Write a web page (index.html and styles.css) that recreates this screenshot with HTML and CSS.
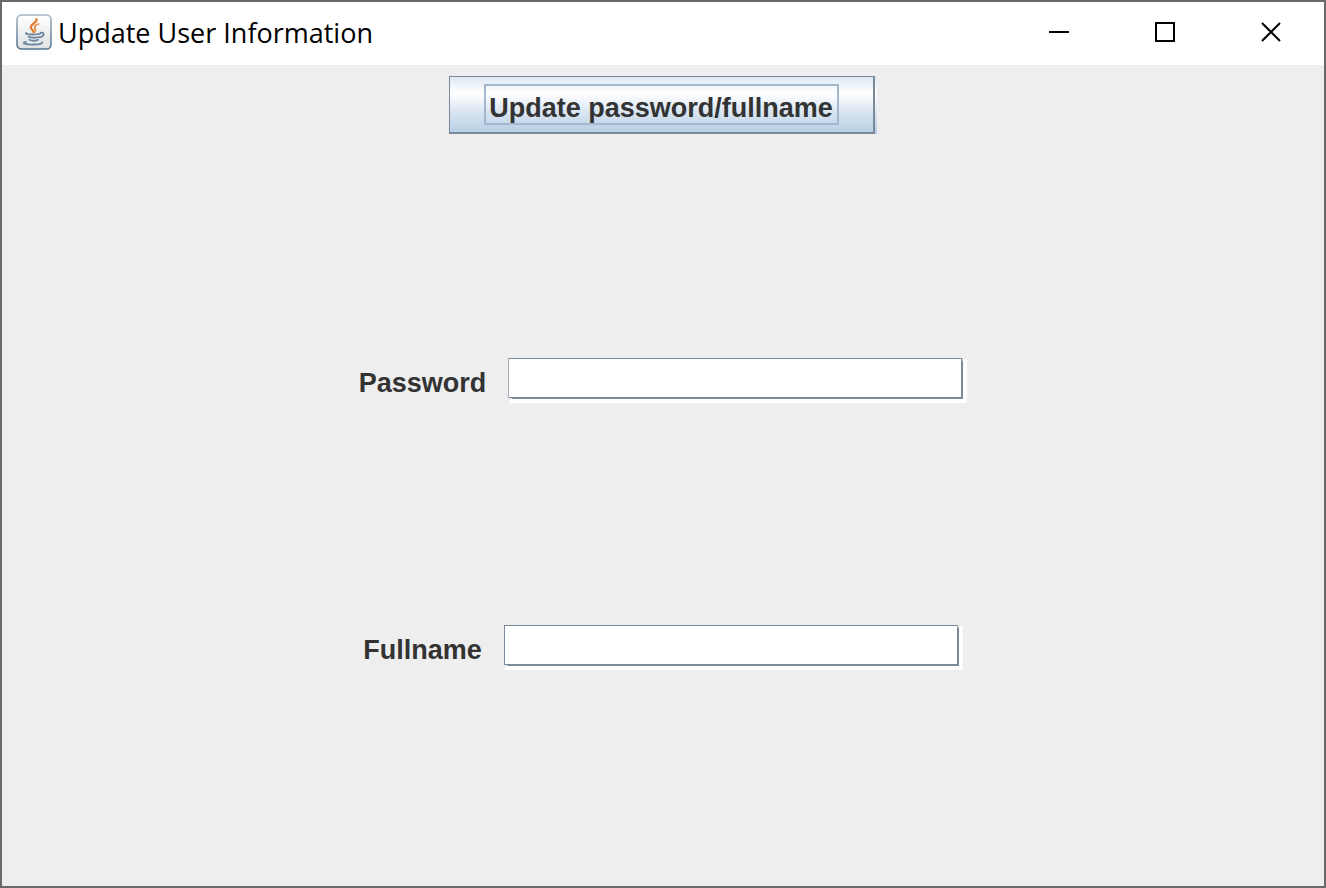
FILE: index.html
```
<!DOCTYPE html>
<html lang="en">
<head>
<meta charset="utf-8">
<title>Update User Information</title>
<link rel="stylesheet" href="styles.css">
</head>
<body>
<div class="window">
  <header class="titlebar">
    <svg class="app-icon" viewBox="0 0 36 36" aria-hidden="true">
      <defs>
        <linearGradient id="plate" x1="0" y1="0" x2="0" y2="1">
          <stop offset="0" stop-color="#fff"/><stop offset="1" stop-color="#dfe1e3"/>
        </linearGradient>
        <linearGradient id="rim" x1="0" y1="0" x2="0" y2="1">
          <stop offset="0" stop-color="#a5b5c2"/><stop offset="1" stop-color="#54748f"/>
        </linearGradient>
      </defs>
      <rect x="1" y="1" width="34" height="34" rx="4.5" fill="url(#plate)" stroke="url(#rim)" stroke-width="1.6"/>
      <g fill="none" stroke-linecap="round">
        <path d="M20.500 5c1 4-7 5-5.500 9 .5 1.500 2 2 2.500 4" stroke="#e8792b" stroke-width="2.200"/>
        <path d="M22.500 10c-3 1-4.500 2.200-3.500 4 .7 1.500 1 2.500-.5 4" stroke="#ef8d45" stroke-width="1.800"/>
        <path d="M10.500 19c-2 .8 1 1.500 6 1.500s7-.4 8-1" stroke="#6c879f" stroke-width="1.800"/>
        <path d="M24.500 18.800c4-1.300 4.500 3.200-.5 4.700" stroke="#6c879f" stroke-width="1.800"/>
        <path d="M12.500 22.800c2 1.200 8 1.200 10.500.2M13.500 25.700c2 1.100 6 1.100 8.500.1" stroke="#6c879f" stroke-width="1.800"/>
        <path d="M10 27.800c-6 1.500 1 2.900 8 2.700 5-.1 9-1 8-2.300" stroke="#6c879f" stroke-width="1.800"/>
      </g>
    </svg>
    <h1 class="title">Update User Information</h1>
    <div class="controls">
      <button class="control" type="button" aria-label="Minimize"><svg class="glyph" viewBox="0 0 20 20"><path d="M0 10H20"/></svg></button>
      <button class="control" type="button" aria-label="Maximize"><svg class="glyph" viewBox="0 0 20 20"><path d="M1 1H19V19H1Z"/></svg></button>
      <button class="control" type="button" aria-label="Close"><svg class="glyph" viewBox="0 0 20 20"><path d="M1 1L19 19M19 1L1 19"/></svg></button>
    </div>
  </header>
  <form class="content">
    <div class="row">
      <button class="update" type="button"><span class="update-text">Update password/fullname</span></button>
    </div>
    <div class="row">
      <label class="label" for="password">Password</label>
      <span class="field"><input class="input" id="password" type="password"></span>
    </div>
    <div class="row">
      <label class="label" for="fullname">Fullname</label>
      <span class="field"><input class="input" id="fullname" type="text"></span>
    </div>
  </form>
</div>
</body>
</html>
```
FILE: styles.css
```
* {
  box-sizing: border-box;
}

body {
  margin: 0;
  font-family: "Liberation Sans", Arial, sans-serif;
}

.window {
  display: flex;
  flex-direction: column;
  min-height: 100vh;
  border: 2px solid #696969;
  background: #eee;
}

.titlebar {
  display: flex;
  align-items: center;
  padding: 0 0 3px 14px;
  background: #fff;
}

.app-icon {
  width: 36px;
  height: 36px;
}

.title {
  flex: 1;
  margin: 0 0 0 6px;
  padding-top: 2px;
  font: 400 27px/36px "Open Sans", "Noto Sans", sans-serif;
  color: #000;
}

.controls {
  display: flex;
}

.control {
  display: grid;
  place-items: center;
  width: 106px;
  height: 60px;
  padding: 0;
  border: 0;
  background: transparent;
}

.glyph {
  width: 20px;
  height: 20px;
  fill: none;
  stroke: #000;
  stroke-width: 2;
}

.content {
  flex: 1;
  display: grid;
  grid-template-rows: 282fr 267fr 272fr;
}

.row {
  display: flex;
  justify-content: center;
  align-items: flex-start;
  gap: 22px;
  padding-top: 11px;
}

.label {
  font-size: 27px;
  font-weight: 700;
  line-height: 50px;
  color: #333;
}

.update {
  position: relative;
  margin: 0 2px 0 0;
  padding: 7px 34px;
  border: solid #7a8a99;
  border-width: 1px 2px 2px 1px;
  background: linear-gradient(#dde8f3, #fff 30%, #dde8f3 60%, #b8cfe5);
  font: 700 27px/34px "Liberation Sans", Arial, sans-serif;
  color: #333;
}

.update::after {
  content: "";
  position: absolute;
  top: -1px;
  bottom: -2px;
  right: -4px;
  width: 2px;
  background: linear-gradient(#dde8f3, #fff 30%, #dde8f3 60%, #b8cfe5);
}

.update-text {
  display: block;
  padding: 7px 6px 0 5px;
  box-shadow: inset 0 0 0 2px #a3b8cc;
}

.field {
  display: flex;
  padding: 0 4px 4px 0;
  background: #fff;
  clip-path: polygon(0 0, calc(100% - 5px) 0, calc(100% - 5px) 3px, 100% 0, 100% 100%, 0 100%, 4px calc(100% - 5px), 0 calc(100% - 5px));
}

.input {
  width: 455px;
  height: 41px;
  padding: 0 4px;
  border: solid #7a8a99;
  border-width: 1px 2px 2px 1px;
  border-radius: 0;
  background: #fff;
  font: 27px "Liberation Sans", Arial, sans-serif;
  color: #333;
  outline: 0;
}
```
